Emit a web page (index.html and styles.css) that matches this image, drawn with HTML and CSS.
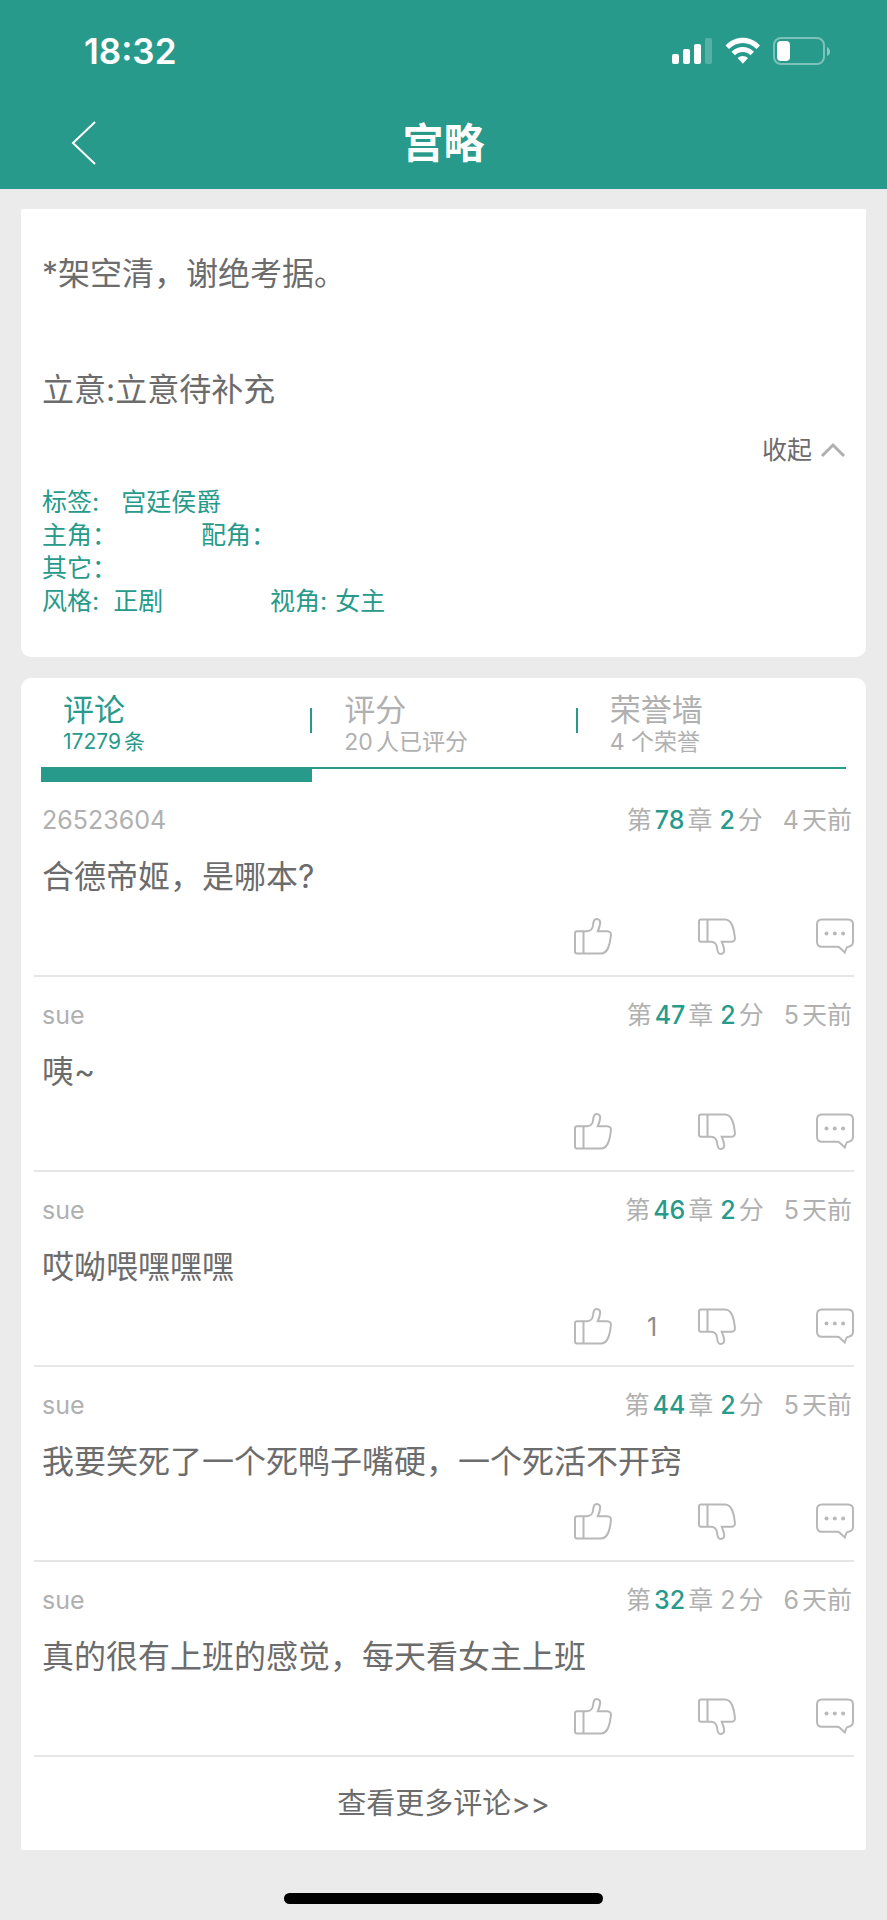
FILE: index.html
```html
<!DOCTYPE html>
<html lang="zh-CN">
<head>
<meta charset="utf-8">
<meta name="viewport" content="width=device-width, initial-scale=1">
<title>宫略</title>
<link rel="stylesheet" href="styles.css">
</head>
<body>
<svg class="sprite" aria-hidden="true">
  <symbol id="thumb" viewBox="0 0 38 37">
    <path d="M3 13.2H13C18 13.2 18.800 10 19.200 6.500C19.500 3 20 1 22.500 1C25.500 1 26.500 3 26.100 5.500C25.700 8.500 25 10.500 23.800 13.200H33C36 13.200 37.200 15 36.900 17.500C36.500 22 35.800 26 34.300 29.500C32.500 33.800 30.500 35.500 27 35.500H3C1.700 35.500 1 34.800 1 33.500V15.200C1 13.900 1.700 13.200 3 13.200ZM9.500 13.200V35.500"/>
  </symbol>
  <symbol id="bubble" viewBox="0 0 38 37">
    <path d="M6 1.500H32C35 1.500 37 3.500 37 6.500V23.500C37 26.500 35.500 28.300 32.500 28.800C31 29 30.500 29.500 30.200 30.500L28.800 34.500L23.800 29.800C23 29 22.300 28.800 21 28.800H6C3 28.800 1 26.800 1 23.800V6.500C1 3.500 3 1.500 6 1.500Z"/>
    <g class="dots"><circle cx="10.500" cy="15.500" r="2"/><circle cx="18.800" cy="15.500" r="2"/><circle cx="27.100" cy="15.500" r="2"/></g>
  </symbol>
</svg>

<header class="header">
  <div class="status">
    <span class="clock">18:32</span>
    <svg class="status-icons" width="160" height="28" viewBox="0 0 160 28" fill="#fff" aria-hidden="true">
      <rect x="1" y="17" width="7" height="10" rx="2"/>
      <rect x="12" y="12" width="7" height="15" rx="2"/>
      <rect x="23" y="7" width="7" height="20" rx="2"/>
      <rect x="34" y="1" width="7" height="26" rx="2" opacity=".22"/>
      <path d="M54.500 8.500C64 -1.800 79.500 -1.800 89 8.500L85.500 12C78 4 65.500 4 58 12ZM60.500 14.800C66.500 8.500 77 8.500 83 14.800L79.500 18.300C75 14 68.500 14 64 18.300ZM66.500 21C69.500 18.200 74 18.200 77 21L71.800 26.800Z"/>
      <rect x="103" y="1" width="50" height="26" rx="7" fill="none" stroke="#fff" stroke-width="2" opacity=".4"/>
      <rect x="106" y="4" width="13" height="20" rx="4"/>
      <path d="M156 10V19C158 18 159 16.500 159 14.500S158 11 156 10Z" opacity=".45"/>
    </svg>
  </div>
  <div class="navbar">
    <button class="back" type="button" aria-label="返回">
      <svg width="26" height="44" viewBox="0 0 26 44"><path d="M25 1L3 22L25 43"/></svg>
    </button>
    <h1 class="title">宫略</h1>
  </div>
</header>

<main class="page">
  <section class="card intro">
    <p class="intro-line">*架空清，谢绝考据。</p>
    <p class="intro-line">立意:立意待补充</p>
    <button class="collapse" type="button">收起
      <svg width="26" height="18" viewBox="0 0 26 18"><path d="M2 15L13 4L24 15"/></svg>
    </button>
    <dl class="facts">
      <div class="fact-row"><div class="fact tags"><dt>标签:</dt><dd>宫廷侯爵</dd></div></div>
      <div class="fact-row"><div class="fact lead"><dt>主角：</dt><dd></dd></div><div class="fact"><dt>配角：</dt><dd></dd></div></div>
      <div class="fact-row"><div class="fact"><dt>其它：</dt><dd></dd></div></div>
      <div class="fact-row"><div class="fact style"><dt>风格:</dt><dd>正剧</dd></div><div class="fact view"><dt>视角:</dt><dd>女主</dd></div></div>
    </dl>
  </section>

  <section class="card reviews" id="comments">
    <div class="tabs" role="tablist">
      <button class="tab active" type="button" role="tab" aria-selected="true"><span class="tab-name">评论</span><span class="tab-count"><span class="num">17279</span>条</span></button>
      <button class="tab" type="button" role="tab" aria-selected="false"><span class="tab-name">评分</span><span class="tab-count"><span class="num">20</span>人已评分</span></button>
      <button class="tab" type="button" role="tab" aria-selected="false"><span class="tab-name">荣誉墙</span><span class="tab-count">4 个荣誉</span></button>
    </div>

    <article class="comment">
      <div class="meta"><span class="user">26523604</span><span class="where">第<b>78</b>章</span><span class="score"><b>2</b>分</span><span class="when"><span class="num">4</span>天前</span></div>
      <p class="text">合德帝姬，是哪本?</p>
      <div class="actions">
        <button class="like" type="button" aria-label="赞"><svg class="icon"><use href="#thumb"/></svg><span class="count"></span></button>
        <button type="button" aria-label="踩"><svg class="icon down"><use href="#thumb"/></svg><span class="count"></span></button>
        <button type="button" aria-label="回复"><svg class="icon"><use href="#bubble"/></svg></button>
      </div>
    </article>

    <article class="comment">
      <div class="meta"><span class="user">sue</span><span class="where">第<b>47</b>章</span><span class="score"><b>2</b>分</span><span class="when"><span class="num">5</span>天前</span></div>
      <p class="text">咦~</p>
      <div class="actions">
        <button class="like" type="button" aria-label="赞"><svg class="icon"><use href="#thumb"/></svg><span class="count"></span></button>
        <button type="button" aria-label="踩"><svg class="icon down"><use href="#thumb"/></svg><span class="count"></span></button>
        <button type="button" aria-label="回复"><svg class="icon"><use href="#bubble"/></svg></button>
      </div>
    </article>

    <article class="comment">
      <div class="meta"><span class="user">sue</span><span class="where">第<b>46</b>章</span><span class="score"><b>2</b>分</span><span class="when"><span class="num">5</span>天前</span></div>
      <p class="text">哎呦喂嘿嘿嘿</p>
      <div class="actions">
        <button class="like" type="button" aria-label="赞 1"><svg class="icon"><use href="#thumb"/></svg><span class="count">1</span></button>
        <button type="button" aria-label="踩"><svg class="icon down"><use href="#thumb"/></svg><span class="count"></span></button>
        <button type="button" aria-label="回复"><svg class="icon"><use href="#bubble"/></svg></button>
      </div>
    </article>

    <article class="comment">
      <div class="meta"><span class="user">sue</span><span class="where">第<b>44</b>章</span><span class="score"><b>2</b>分</span><span class="when"><span class="num">5</span>天前</span></div>
      <p class="text">我要笑死了一个死鸭子嘴硬，一个死活不开窍</p>
      <div class="actions">
        <button class="like" type="button" aria-label="赞"><svg class="icon"><use href="#thumb"/></svg><span class="count"></span></button>
        <button type="button" aria-label="踩"><svg class="icon down"><use href="#thumb"/></svg><span class="count"></span></button>
        <button type="button" aria-label="回复"><svg class="icon"><use href="#bubble"/></svg></button>
      </div>
    </article>

    <article class="comment">
      <div class="meta"><span class="user">sue</span><span class="where">第<b>32</b>章</span><span class="score"><span class="num">2</span>分</span><span class="when"><span class="num">6</span>天前</span></div>
      <p class="text">真的很有上班的感觉，每天看女主上班</p>
      <div class="actions">
        <button class="like" type="button" aria-label="赞"><svg class="icon"><use href="#thumb"/></svg><span class="count"></span></button>
        <button type="button" aria-label="踩"><svg class="icon down"><use href="#thumb"/></svg><span class="count"></span></button>
        <button type="button" aria-label="回复"><svg class="icon"><use href="#bubble"/></svg></button>
      </div>
    </article>

    <a class="more" href="#comments">查看更多评论&gt;&gt;</a>
  </section>
</main>

<footer class="home"><span class="home-bar"></span></footer>
</body>
</html>
```

FILE: styles.css
```css
:root {
  --green: #279a8c;
  --dark: #6c6c6c;
  --light: #b0b0b0;
  --line: #e6e6e6;
}

* { box-sizing: border-box; }

body {
  margin: 0;
  background: #ebebeb;
  color: var(--dark);
  font-family: Inter, "Noto Sans CJK SC", sans-serif;
  font-size: 25px;
  line-height: 32px;
}

button {
  margin: 0;
  padding: 0;
  border: 0;
  background: none;
  color: inherit;
  font: inherit;
  text-align: left;
}

h1, p, dl, dd { margin: 0; }

svg { display: block; }

.sprite { position: absolute; width: 0; height: 0; }

/* Header */
.header {
  background: var(--green);
  color: #fff;
}

.status {
  display: flex;
  justify-content: space-between;
  align-items: center;
  height: 102px;
  padding: 0 56px 0 84px;
}

.clock {
  font-size: 35px;
  font-weight: 600;
}

.navbar {
  display: grid;
  grid-template-columns: 1fr auto 1fr;
  align-items: center;
  height: 87px;
  padding: 0 70px 6px;
}

.back { justify-self: start; }

.back path {
  fill: none;
  stroke: #fff;
  stroke-width: 2;
}

.title {
  font-size: 41px;
  font-weight: 700;
  line-height: 48px;
}

/* Cards */
.page {
  display: flex;
  flex-direction: column;
  gap: 21px;
  padding: 20px 21px 0;
}

.card { background: #fff; }

.intro {
  display: flex;
  flex-direction: column;
  padding: 41px 20px 39px 21px;
  border-radius: 2px 2px 10px 10px;
}

.intro-line {
  font-size: 32px;
  line-height: 48px;
}

.intro-line + .intro-line { margin-top: 68px; }

.collapse {
  display: flex;
  align-items: center;
  align-self: flex-end;
  gap: 8px;
  margin-top: 20px;
}

.collapse path {
  fill: none;
  stroke: var(--light);
  stroke-width: 3;
}

.facts {
  margin-top: 20px;
  color: var(--green);
  line-height: 33px;
}

.fact-row, .fact { display: flex; }

.tags { gap: 22px; }
.lead { width: 159px; }
.style { width: 228px; gap: 14px; }
.view { gap: 8px; }

/* Tabs */
.reviews { border-radius: 10px 10px 2px 2px; }

.tabs {
  display: grid;
  grid-template-columns: 271fr 265fr 268fr;
  align-items: start;
  margin: 0 20px;
}

.tab {
  display: flex;
  flex-direction: column;
  padding: 14px 0 11px 32px;
  border-bottom: 2px solid var(--green);
  background: linear-gradient(var(--green), var(--green)) no-repeat right 30px / 2px 25px;
  color: var(--light);
}

.tab:last-child { background: none; }

.tab.active {
  padding-left: 22px;
  border-bottom-width: 15px;
  color: var(--green);
}

.tab-name {
  font-size: 31px;
  line-height: 36px;
}

.tab-count {
  font-size: 23px;
  line-height: 28px;
}

.tab.active .tab-count { font-size: 21px; }

.tab-count .num { margin-right: 3px; }

/* Comments */
.comment {
  margin: 0 12px 0 13px;
  padding: 22px 0 20px 8px;
  border-bottom: 2px solid var(--line);
}

.meta {
  display: flex;
  padding-right: 2px;
  color: var(--light);
}

.user { flex: 1; }

.meta b {
  margin: 0 3px;
  color: var(--green);
  font-weight: 500;
}

.meta .num { margin-right: 3px; }

.score { margin-left: 4px; }
.score .num { margin-left: 3px; }
.when { margin-left: 20px; }

.text {
  margin-top: 17px;
  font-size: 32px;
  line-height: 48px;
}

.actions {
  display: flex;
  justify-content: flex-end;
  margin-top: 17px;
}

.actions button {
  display: flex;
  align-items: center;
}

.actions .like { margin-right: 6px; }

.icon {
  width: 38px;
  height: 37px;
  fill: none;
  stroke: #b8b8b8;
  stroke-width: 2;
}

.icon.down { transform: scaleY(-1); }

.dots { fill: #b8b8b8; stroke: none; }

.count {
  width: 80px;
  color: #8c8c8c;
  text-align: center;
}

.more {
  display: block;
  padding: 23px 0 22px;
  color: var(--dark);
  font-size: 29px;
  line-height: 48px;
  text-align: center;
  text-decoration: none;
}

/* Home indicator */
.home {
  display: flex;
  justify-content: center;
  padding: 43px 0 16px;
}

.home-bar {
  width: 36%;
  height: 11px;
  border-radius: 6px;
  background: #000;
}
```
